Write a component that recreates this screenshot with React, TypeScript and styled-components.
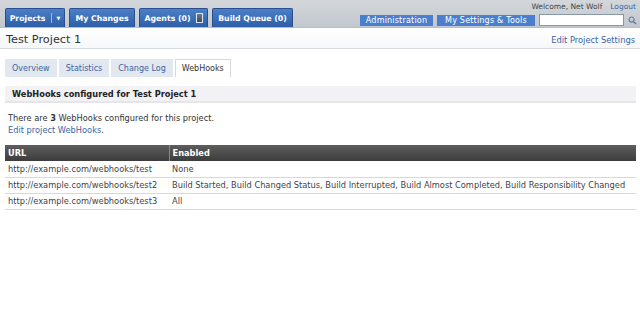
import React from "react";
import styled, { createGlobalStyle } from "styled-components";

const Global = createGlobalStyle`
  html, body { margin: 0; padding: 0; background: #fff; }
  body { font-family: "DejaVu Sans", Verdana, sans-serif; font-size: 8.25px; color: #333; }
  * { box-sizing: border-box; }
`;

const Header = styled.div`
  height: 28px;
  background: linear-gradient(#d3d7dc, #c3c8ce);
  display: flex;
  justify-content: space-between;
  align-items: flex-end;
  padding: 0 3px 0 5px;
  border-bottom: 1px solid #b8bec6;
`;

const NavTabs = styled.div`
  display: flex;
  gap: 4px;
  align-items: flex-end;
`;

const NavTab = styled.div<{ $w: number }>`
  width: ${(p) => p.$w}px;
  height: 19px;
  background: linear-gradient(#4a80c8, #2d5ea8);
  border: 1px solid #2a4f8c;
  border-bottom: none;
  border-radius: 2px 2px 0 0;
  color: #fff;
  font-weight: bold;
  font-size: 7.8px;
  display: flex;
  align-items: center;
  justify-content: center;
  gap: 5px;
`;

const Sep = styled.span`
  width: 1px;
  height: 10px;
  background: #9ab8e0;
`;

const Caret = styled.span`
  font-size: 5px;
`;

const AgentIcon = styled.span`
  width: 7px;
  height: 10px;
  background: linear-gradient(#6b7a90, #3d4a5e);
  border: 1px solid #dfe6f0;
`;

const RightBox = styled.div`
  display: flex;
  flex-direction: column;
  align-items: flex-end;
  gap: 3px;
  padding-bottom: 1px;
`;

const Welcome = styled.div`
  font-size: 7.5px;
  color: #444;
  display: flex;
  gap: 8px;
  padding-right: 1px;
`;

const LinkA = styled.a`
  color: #3b64a4;
  text-decoration: none;
`;

const ToolsRow = styled.div`
  display: flex;
  align-items: center;
  gap: 4px;
`;

const ToolBtn = styled.div<{ $w: number }>`
  width: ${(p) => p.$w}px;
  height: 11px;
  background: #4a7fd0;
  color: #fff;
  font-size: 8px;
  display: flex;
  align-items: center;
  justify-content: center;
  letter-spacing: 0.2px;
`;

const Search = styled.div`
  width: 85px;
  height: 12px;
  background: #fff;
  border: 1px solid #8a96a6;
`;

const TitleBar = styled.div`
  height: 21px;
  display: flex;
  justify-content: space-between;
  align-items: center;
  padding: 3px 5px 0 6px;
  background: linear-gradient(#ffffff, #f6f7f9);
  border-bottom: 1px solid #d6d9de;
`;

const Title = styled.div`
  font-size: 11.3px;
  color: #333;
`;

const TitleLink = styled(LinkA)`
  font-size: 8.3px;
`;

const Tabs = styled.div`
  display: flex;
  gap: 2px;
  padding: 10px 5px 0 5px;
`;

const Tab = styled.div<{ $active?: boolean }>`
  height: 18px;
  padding: 0 6px;
  display: flex;
  align-items: center;
  font-size: 8px;
  background: ${(p) => (p.$active ? "#fff" : "#e2e8ef")};
  border: 1px solid ${(p) => (p.$active ? "#d6d9de" : "#e2e8ef")};
  border-bottom: none;
  color: ${(p) => (p.$active ? "#333" : "#3b64a4")};
`;

const SectionHead = styled.div`
  margin: 9px 4px 0 5px;
  height: 17px;
  background: #f2f2f5;
  border-bottom: 2px solid #e6e6ea;
  font-weight: bold;
  color: #222;
  display: flex;
  align-items: center;
  padding-left: 7px;
`;

const Para = styled.div`
  padding: 9px 8px 0 8px;
  line-height: 12px;
`;

const Table = styled.table`
  margin: 9px 4px 0 5px;
  width: calc(100% - 9px);
  border-collapse: collapse;
`;

const Th = styled.th<{ $w?: number }>`
  text-align: left;
  height: 16px;
  padding: 0 3px;
  background: linear-gradient(#5e5e5e, #3c3c3c);
  color: #fff;
  font-weight: bold;
  border-left: 1px solid #888;
  width: ${(p) => (p.$w ? p.$w + "px" : "auto")};
  &:first-child { border-left: none; }
`;

const Td = styled.td`
  height: 16px;
  padding: 0 3px;
  border-bottom: 1px solid #d8d8d8;
  color: #444;
  white-space: nowrap;
`;

const rows = [
  ["http://example.com/webhooks/test", "None"],
  ["http://example.com/webhooks/test2", "Build Started, Build Changed Status, Build Interrupted, Build Almost Completed, Build Responsibility Changed"],
  ["http://example.com/webhooks/test3", "All"],
];

export default function App() {
  return (
    <>
      <Global />
      <Header>
        <NavTabs>
          <NavTab $w={60}>
            Projects <Sep /> <Caret>▼</Caret>
          </NavTab>
          <NavTab $w={66}>My Changes</NavTab>
          <NavTab $w={69}>
            Agents (0) <AgentIcon />
          </NavTab>
          <NavTab $w={81}>Build Queue (0)</NavTab>
        </NavTabs>
        <RightBox>
          <Welcome>
            <span>Welcome, Net Wolf</span>
            <LinkA>Logout</LinkA>
          </Welcome>
          <ToolsRow>
            <ToolBtn $w={73}>Administration</ToolBtn>
            <ToolBtn $w={98}>My Settings &amp; Tools</ToolBtn>
            <Search />
            <svg width="9" height="9" viewBox="0 0 10 10">
              <circle cx="4" cy="4" r="2.8" fill="none" stroke="#5a7aa8" strokeWidth="1.2" />
              <line x1="6" y1="6" x2="9" y2="9" stroke="#5a7aa8" strokeWidth="1.5" />
            </svg>
          </ToolsRow>
        </RightBox>
      </Header>
      <TitleBar>
        <Title>Test Project 1</Title>
        <TitleLink>Edit Project Settings</TitleLink>
      </TitleBar>
      <Tabs>
        <Tab>Overview</Tab>
        <Tab>Statistics</Tab>
        <Tab>Change Log</Tab>
        <Tab $active>WebHooks</Tab>
      </Tabs>
      <SectionHead>WebHooks configured for Test Project 1</SectionHead>
      <Para>
        There are <b>3</b> WebHooks configured for this project.
        <br />
        <LinkA>Edit project WebHooks</LinkA>.
      </Para>
      <Table>
        <thead>
          <tr>
            <Th $w={164}>URL</Th>
            <Th>Enabled</Th>
          </tr>
        </thead>
        <tbody>
          {rows.map((r) => (
            <tr key={r[0]}>
              <Td>{r[0]}</Td>
              <Td>{r[1]}</Td>
            </tr>
          ))}
        </tbody>
      </Table>
    </>
  );
}
